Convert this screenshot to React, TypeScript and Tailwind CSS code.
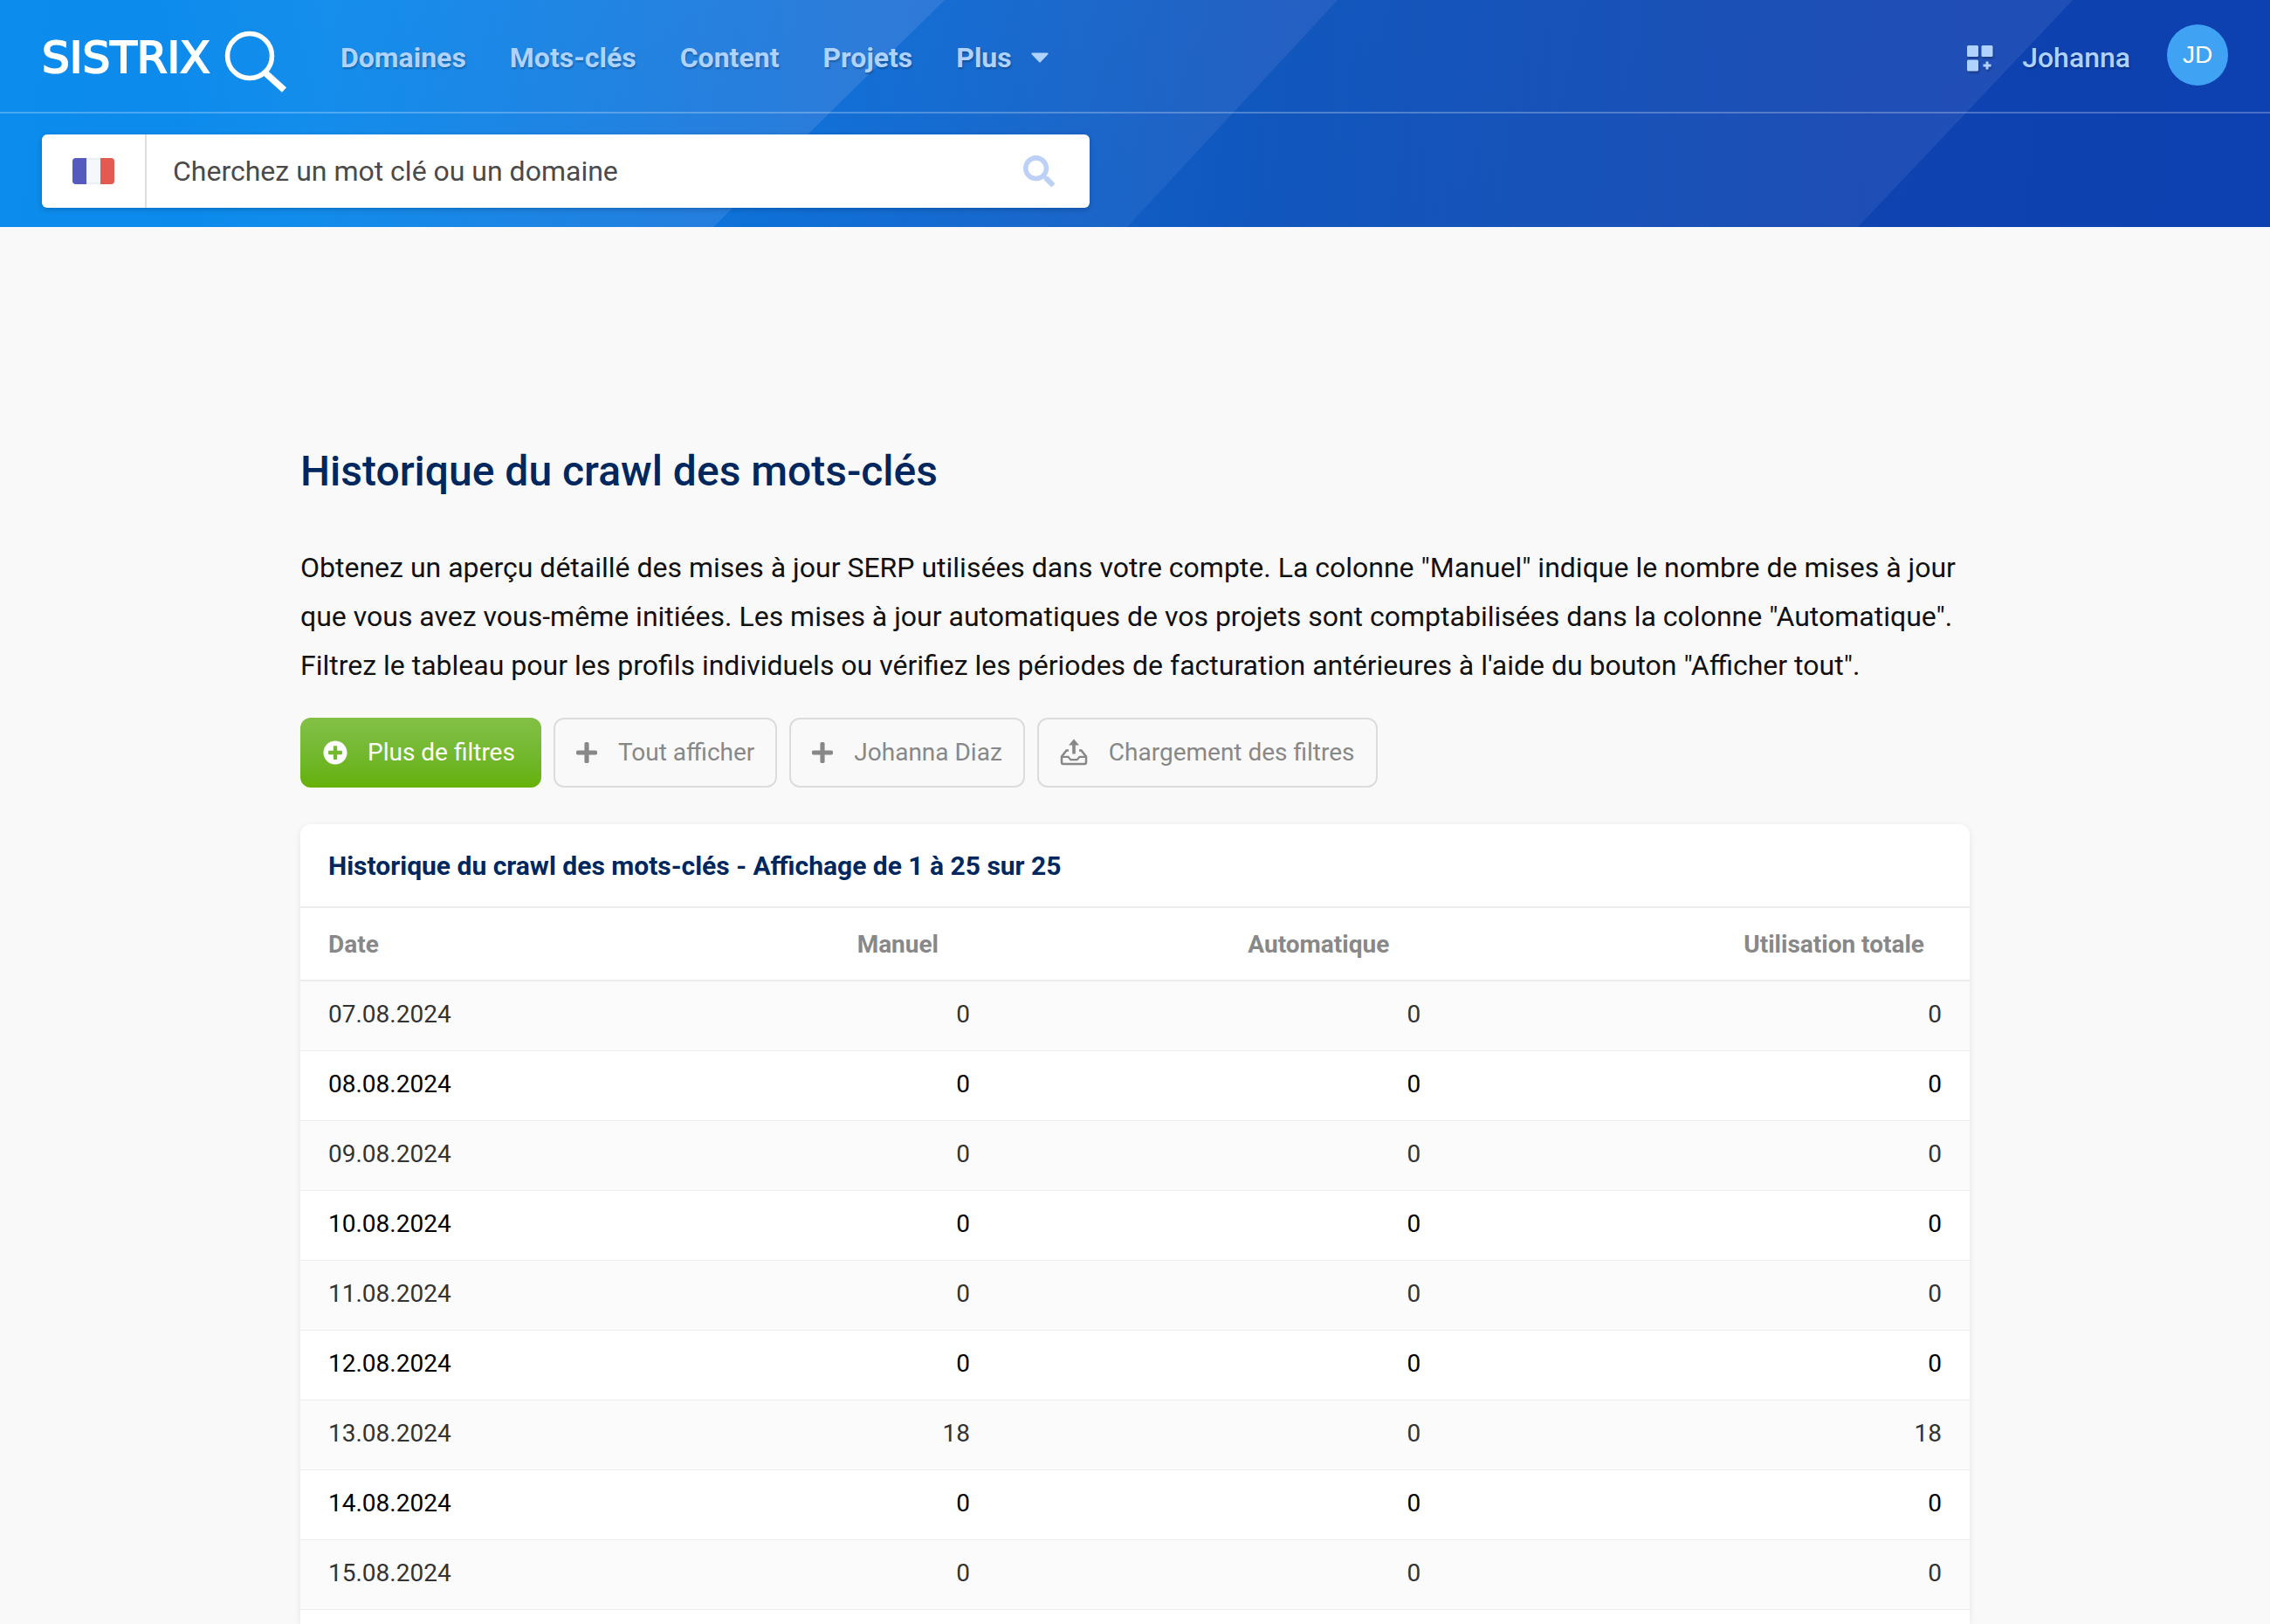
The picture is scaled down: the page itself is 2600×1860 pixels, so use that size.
import type { ReactNode } from "react";
import { FaPlus, FaPlusCircle, FaSearch } from "react-icons/fa";

const navItems = ["Domaines", "Mots-clés", "Content", "Projets"];

const rows = [
  { date: "07.08.2024", manual: 0, auto: 0, total: 0 },
  { date: "08.08.2024", manual: 0, auto: 0, total: 0 },
  { date: "09.08.2024", manual: 0, auto: 0, total: 0 },
  { date: "10.08.2024", manual: 0, auto: 0, total: 0 },
  { date: "11.08.2024", manual: 0, auto: 0, total: 0 },
  { date: "12.08.2024", manual: 0, auto: 0, total: 0 },
  { date: "13.08.2024", manual: 18, auto: 0, total: 18 },
  { date: "14.08.2024", manual: 0, auto: 0, total: 0 },
  { date: "15.08.2024", manual: 0, auto: 0, total: 0 },
];

function HeaderStripes() {
  return (
    <svg className="absolute inset-0 h-full w-full" viewBox="0 0 2600 260" preserveAspectRatio="none" aria-hidden="true">
      <defs>
        <linearGradient id="stripe1" gradientUnits="userSpaceOnUse" x1="200" y1="200" x2="1000" y2="0">
          <stop offset="0" stopColor="#fff" stopOpacity="0" />
          <stop offset="1" stopColor="#f0e0ff" stopOpacity="0.14" />
        </linearGradient>
        <linearGradient id="stripe2" gradientUnits="userSpaceOnUse" x1="850" y1="160" x2="1480" y2="0">
          <stop offset="0" stopColor="#fff" stopOpacity="0" />
          <stop offset="1" stopColor="#f0d0ff" stopOpacity="0.09" />
        </linearGradient>
        <linearGradient id="stripe3" gradientUnits="userSpaceOnUse" x1="1400" y1="130" x2="2260" y2="130">
          <stop offset="0" stopColor="#fff" stopOpacity="0" />
          <stop offset="1" stopColor="#f0e0ff" stopOpacity="0.08" />
        </linearGradient>
      </defs>
      <polygon points="0,0 1082,0 817,260 0,260" fill="url(#stripe1)" />
      <polygon points="1082,0 1532,0 1291,260 817,260" fill="url(#stripe2)" />
      <polygon points="1532,0 2374,0 2128,260 1291,260" fill="url(#stripe3)" />
    </svg>
  );
}

function Logo() {
  return (
    <a href="#" aria-label="SISTRIX" className="flex items-center text-white">
      <span className="w-[206px] font-['DejaVu_Sans',sans-serif] text-[50px] leading-[56px] [-webkit-text-stroke:2px_currentColor]">
        SISTRIX
      </span>
      <svg className="mt-2 h-[72px] w-[76px]" viewBox="0 0 76 72" fill="none" stroke="currentColor" aria-hidden="true">
        <circle cx="32" cy="30" r="25.5" strokeWidth="5.5" />
        <path d="M50 49.5 L71.500 69" strokeWidth="7.500" />
      </svg>
    </a>
  );
}

function AppsIcon() {
  return (
    <svg className="h-8 w-8 drop-shadow-[1px_2px_1px_rgba(0,0,0,0.25)]" viewBox="0 0 32 32" fill="currentColor" aria-hidden="true">
      <rect x="1" y="2" width="13" height="13" rx="1.500" />
      <rect x="17.500" y="2" width="13" height="13" rx="1.500" />
      <rect x="1" y="18.500" width="13" height="13" rx="1.500" />
      <path d="M22.500 20.500h3v3h3v3h-3v3h-3v-3h-3v-3h3z" />
    </svg>
  );
}

function UploadIcon() {
  return (
    <svg className="h-8 w-8" viewBox="0 0 32 32" fill="none" stroke="currentColor" aria-hidden="true">
      <path d="M10 13.500H7.500L2 20.500V27a2 2 0 0 0 2 2h24a2 2 0 0 0 2-2v-6.500L24.500 13.500H22" strokeWidth="2.500" />
      <path d="M2.500 20.800h7l2.800 3.400h7.400l2.800-3.400h7" strokeWidth="2.300" />
      <path d="M16 17.500V6" strokeWidth="3.600" />
      <path d="M16 0.500l6 7H10z" fill="currentColor" stroke="none" />
    </svg>
  );
}

function FilterButton({ icon, children }: { icon: ReactNode; children: ReactNode }) {
  return (
    <button
      type="button"
      className="flex h-20 items-center gap-6 rounded-xl border-2 border-[#dcdcdc] px-6 text-[28px] text-[#888]"
    >
      {icon}
      {children}
    </button>
  );
}

export default function App() {
  return (
    <div className="flex h-screen flex-col overflow-hidden bg-[#f9f9f9] font-['Roboto',sans-serif]">
      <header className="relative bg-[linear-gradient(97deg,#0c8ced_0%,#0c8aec_14%,#0e6ed6_36%,#1056bd_56%,#0e43b0_82%,#0d40b0_100%)]">
        <HeaderStripes />
        <div className="relative flex h-[130px] items-center border-b-2 border-white/25 px-12 pt-[3px]">
          <Logo />
          <nav className="ml-[60px] flex items-center gap-[50px] text-[32px] font-bold text-[#afd2ff] [text-shadow:1px_2px_2px_rgba(0,0,0,0.25)]">
            {navItems.map((item) => (
              <a key={item} href="#">{item}</a>
            ))}
            <button type="button" className="flex items-center gap-[22px] [text-shadow:inherit]">
              Plus
              <svg className="h-3 w-5" viewBox="0 0 20 12" fill="currentColor" aria-hidden="true">
                <path d="M1.500 0.500h17a1 1 0 0 1 .8 1.700l-8.300 8.800a1.400 1.400 0 0 1-2 0L.700 2.200a1 1 0 0 1 .8-1.700z" />
              </svg>
            </button>
          </nav>
          <div className="ml-auto flex items-center text-[32px] font-medium text-[#afd2ff]">
            <button type="button" aria-label="Applications"><AppsIcon /></button>
            <a href="#" className="ml-8 [text-shadow:1px_2px_2px_rgba(0,0,0,0.25)]">Johanna</a>
            <button
              type="button"
              className="mb-[6px] ml-[42px] h-[70px] w-[70px] rounded-full bg-[#3fa2f3] font-['Liberation_Sans',sans-serif] text-[28px] font-normal text-white"
            >
              JD
            </button>
          </div>
        </div>
        <div className="relative px-12 pt-6 pb-[22px]">
          <form className="flex h-[84px] max-w-[1200px] overflow-hidden rounded-md bg-white shadow-[0_2px_6px_rgba(0,0,0,0.2)]">
            <button type="button" aria-label="France" className="flex w-[120px] items-center justify-center border-r-2 border-[#dedede]">
              <span className="flex h-[30px] w-12 overflow-hidden rounded-sm">
                <span className="flex-1 bg-[#555abf]" />
                <span className="flex-1 border-y-2 border-[#ebeff2] bg-[#f5f8fb]" />
                <span className="flex-1 bg-[#e35b50]" />
              </span>
            </button>
            <input
              type="text"
              aria-label="Recherche"
              placeholder="Cherchez un mot clé ou un domaine"
              className="min-w-0 flex-1 px-[30px] text-[32px] text-[#4a4a4a] outline-none placeholder:text-[#4a4a4a]"
            />
            <button type="submit" aria-label="Rechercher" className="px-10 text-[#bdd1f6]">
              <FaSearch className="h-9 w-9" />
            </button>
          </form>
        </div>
      </header>

      <main className="mx-auto flex w-full max-w-[1912px] flex-1 flex-col pt-[252px]">
        <h1 className="text-5xl leading-[56px] font-medium text-[#00285f]">
          Historique du crawl des mots-clés
        </h1>
        <p className="mt-[54px] text-[32px] leading-[56px] text-[#111]">
          Obtenez un aperçu détaillé des mises à jour SERP utilisées dans votre compte. La colonne "Manuel" indique le
          nombre de mises à jour que vous avez vous-même initiées. Les mises à jour automatiques de vos projets sont
          comptabilisées dans la colonne "Automatique". Filtrez le tableau pour les profils individuels ou vérifiez les
          périodes de facturation antérieures à l'aide du bouton "Afficher tout".
        </p>

        <div className="mt-8 flex flex-wrap gap-[14px]">
          <button
            type="button"
            className="flex h-20 items-center gap-[23px] rounded-xl bg-linear-to-b from-[#82c046] to-[#65b105] pr-[30px] pl-[26px] text-[28px] text-white"
          >
            <FaPlusCircle className="h-7 w-7" />
            Plus de filtres
          </button>
          <FilterButton icon={<FaPlus className="h-7 w-6" />}>Tout afficher</FilterButton>
          <FilterButton icon={<FaPlus className="h-7 w-6" />}>Johanna Diaz</FilterButton>
          <FilterButton icon={<UploadIcon />}>Chargement des filtres</FilterButton>
        </div>

        <section className="mt-[42px] flex-1 rounded-t-xl bg-white shadow-[0_2px_8px_rgba(0,0,0,0.08)]">
          <h2 className="flex h-24 items-center border-b-2 border-[#ececec] px-8 text-[30px] font-bold text-[#00285f]">
            Historique du crawl des mots-clés - Affichage de 1 à 25 sur 25
          </h2>
          <table className="w-full table-fixed border-separate border-spacing-0 text-[28px]">
            <colgroup>
              <col className="w-[28%]" />
              <col className="w-[14%]" />
              <col className="w-[27%]" />
              <col className="w-[31%]" />
            </colgroup>
            <thead>
              <tr className="h-[84px] text-right text-[#888] [&>th]:border-b-2 [&>th]:border-[#ececec] [&>th]:pt-[2px]">
                <th className="pl-8 text-left">Date</th>
                <th className="pr-[72px]">Manuel</th>
                <th className="pr-[72px]">Automatique</th>
                <th className="pr-[52px]">Utilisation totale</th>
              </tr>
            </thead>
            <tbody>
              {rows.map((row) => (
                <tr
                  key={row.date}
                  className="h-20 text-right text-black odd:bg-[#fbfbfb] odd:text-[#333] [&>td]:border-b [&>td]:border-[#ececec] [&>td]:pb-[3px]"
                >
                  <td className="pl-8 text-left">{row.date}</td>
                  <td className="pr-9">{row.manual}</td>
                  <td className="pr-9">{row.auto}</td>
                  <td className="pr-8">{row.total}</td>
                </tr>
              ))}
            </tbody>
          </table>
        </section>
      </main>
    </div>
  );
}
